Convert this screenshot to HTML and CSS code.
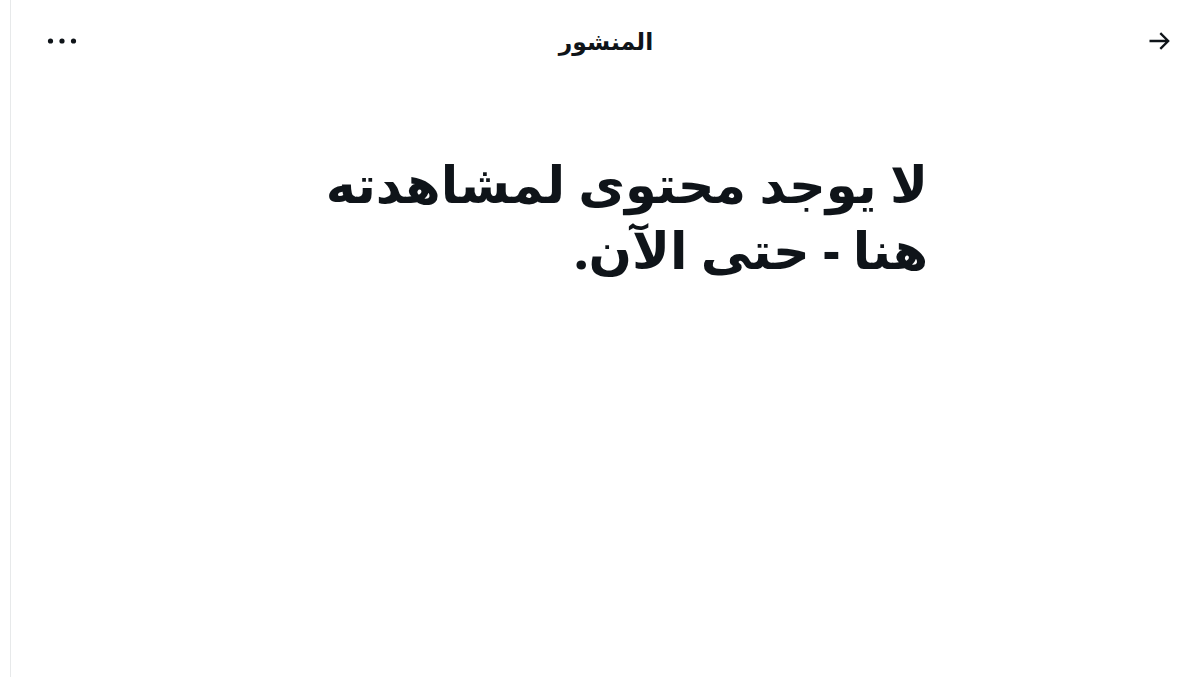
FILE: index.html
```html
<!DOCTYPE html>
<html lang="ar" dir="rtl">
<head>
<meta charset="utf-8">
<link rel="stylesheet" href="styles.css">
</head>
<body>
<div class="page">
  <header class="topbar">
    <button class="icon-btn back" aria-label="رجوع">
      <svg viewBox="0 0 24 24" width="28" height="28"><path d="M7.414 13l5.043 5.04-1.414 1.42L3.586 12l7.457-7.46 1.414 1.42L7.414 11H21v2H7.414z" transform="translate(24,0) scale(-1,1)"/></svg>
    </button>
    <h2 class="title">المنشور</h2>
    <button class="icon-btn more" aria-label="المزيد">
      <svg viewBox="0 0 32 24" width="32" height="24"><circle cx="4.5" cy="12" r="2.6"/><circle cx="16" cy="12" r="2.6"/><circle cx="27.5" cy="12" r="2.6"/></svg>
    </button>
  </header>
  <main class="empty">
    <div class="empty-inner">
      <h1 class="empty-title">لا يوجد محتوى لمشاهدته هنا - حتى الآن.</h1>
    </div>
  </main>
</div>
</body>
</html>
```

FILE: styles.css
```css
html, body {
  margin: 0;
  padding: 0;
  background: #fff;
  height: 100%;
}
body {
  font-family: "Noto Sans", "DejaVu Sans", sans-serif;
  color: #0f1419;
}
.page {
  margin-left: 10px;
  border-left: 1px solid #e7e9ea;
  min-height: 677px;
  box-sizing: border-box;
}
.topbar {
  height: 82px;
  display: flex;
  align-items: center;
  justify-content: space-between;
  padding: 0 20px 0 31px;
}
.icon-btn {
  background: none;
  border: 0;
  padding: 0;
  width: 40px;
  height: 40px;
  display: flex;
  align-items: center;
  justify-content: center;
  color: #0f1419;
}
.icon-btn svg { fill: currentColor; }
.title {
  margin: 0;
  padding-right: 10px;
  font-size: 23.5px;
  font-weight: 700;
}
.empty {
  display: flex;
  justify-content: center;
  padding-top: 68px;
}
.empty-inner {
  width: 620px;
  margin-left: 25px;
}
.empty-title {
  margin: 0;
  font-size: 51px;
  line-height: 66px;
  font-weight: 800;
}
```
